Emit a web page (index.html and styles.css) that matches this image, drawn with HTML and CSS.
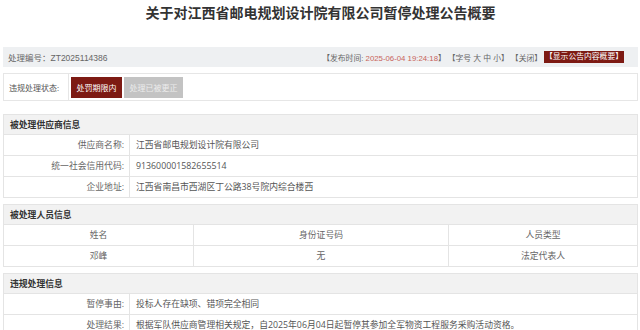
FILE: index.html
```html
<!DOCTYPE html>
<html lang="zh-CN">
<head>
<meta charset="utf-8">
<title>暂停处理公告概要</title>
<link rel="stylesheet" href="styles.css">
</head>
<body>
<div class="page">
  <h1 class="title">关于对江西省邮电规划设计院有限公司暂停处理公告概要</h1>

  <div class="infobar">
    <div class="infobar-left">处理编号：ZT2025114386</div>
    <div class="infobar-right">
      <span>【发布时间: <em class="date">2025-06-04 19:24:18</em>】</span>
      <span>【字号 大 中 小】</span>
      <span>【关闭】</span>
      <span class="show-btn">【显示公告内容概要】</span>
    </div>
  </div>

  <div class="status">
    <div class="status-label">违规处理状态:</div>
    <div class="status-btns">
      <span class="btn btn-active">处罚期限内</span>
      <span class="btn btn-gray">处理已被更正</span>
    </div>
  </div>

  <div class="box box-first">
    <div class="box-head">被处理供应商信息</div>
    <div class="kv"><div class="k">供应商名称:</div><div class="v">江西省邮电规划设计院有限公司</div></div>
    <div class="kv"><div class="k">统一社会信用代码:</div><div class="v">913600001582655514</div></div>
    <div class="kv"><div class="k">企业地址:</div><div class="v">江西省南昌市西湖区丁公路38号院内综合楼西</div></div>
  </div>

  <div class="box">
    <div class="box-head">被处理人员信息</div>
    <div class="tr"><div class="td">姓名</div><div class="td">身份证号码</div><div class="td">人员类型</div></div>
    <div class="tr"><div class="td">邓峰</div><div class="td">无</div><div class="td">法定代表人</div></div>
  </div>

  <div class="box">
    <div class="box-head">违规处理信息</div>
    <div class="kv"><div class="k">暂停事由:</div><div class="v">投标人存在缺项、错项完全相同</div></div>
    <div class="kv"><div class="k">处理结果:</div><div class="v">根据军队供应商管理相关规定，自2025年06月04日起暂停其参加全军物资工程服务采购活动资格。</div></div>
  </div>
</div>
</body>
</html>
```

FILE: styles.css
```css
* { box-sizing: border-box; }
html, body { margin: 0; padding: 0; background: #fff; }
body {
  font-family: "Open Sans", "Noto Sans CJK SC", sans-serif;
  font-size: 8.8px;
  color: #555;
}
.page { width: 640px; padding: 0 2px 0 3px; }

.title {
  margin: 0 0 23px;
  height: 24px;
  line-height: 24px;
  text-align: center;
  font-size: 14px;
  font-weight: bold;
  color: #333;
  font-family: "Noto Sans CJK SC", sans-serif;
}

.infobar {
  height: 20px;
  background: #eef0f2;
  display: flex;
  align-items: center;
  justify-content: space-between;
  padding: 0 14px 0 5px;
  font-family: "Liberation Sans", "Noto Sans CJK SC", sans-serif;
  font-size: 7.8px;
  color: #666;
}
.infobar-left { font-size: 8.5px; }
.infobar-right { display: flex; align-items: center; gap: 2px; }
.date { font-style: normal; color: #c8645a; }
.show-btn {
  background: #7d1a13;
  color: #fff;
  height: 12px;
  line-height: 12px;
  padding: 0 1px;
}

.status {
  margin-top: 6px;
  height: 28px;
  border: 1px solid #e6e6e6;
  display: flex;
}
.status-label {
  width: 65px;
  border-right: 1px solid #e6e6e6;
  display: flex;
  align-items: center;
  padding-left: 5px;
  font-size: 8px;
  color: #555;
}
.status-btns { display: flex; align-items: center; gap: 2px; padding-left: 2px; }
.btn {
  height: 21px;
  line-height: 21px;
  padding: 0;
  font-size: 8px;
  color: #fff;
  white-space: nowrap;
  text-align: center;
}
.btn-active { background: #7d1a13; width: 51px; }
.btn-gray { background: #c3c3c3; color: #ececec; width: 59px; }

.box { border: 1px solid #e4e4e4; margin-top: 6px; }
.box-first { margin-top: 13px; }
.box-head {
  height: 19px;
  line-height: 19px;
  background: #f2f2f2;
  padding-left: 6px;
  font-weight: bold;
  color: #333;
  font-family: "Noto Sans CJK SC", sans-serif;
}
.kv {
  display: grid;
  grid-template-columns: 126px 1fr;
  border-top: 1px solid #e4e4e4;
  height: 21px;
}
.k {
  text-align: right;
  padding-right: 5px;
  line-height: 20px;
  border-right: 1px solid #e4e4e4;
  color: #666;
}
.v { padding-left: 6px; line-height: 20px; color: #555; white-space: nowrap; }

.tr {
  display: grid;
  grid-template-columns: 189px 255px 1fr;
  border-top: 1px solid #e4e4e4;
  height: 21px;
}
.td {
  text-align: center;
  line-height: 20px;
  color: #666;
}
.td + .td { border-left: 1px solid #e4e4e4; }
```
